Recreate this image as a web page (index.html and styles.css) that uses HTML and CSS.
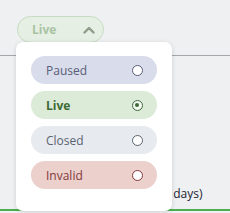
FILE: index.html
```html
<!DOCTYPE html>
<html>
<head>
<meta charset="utf-8">
<link rel="stylesheet" href="styles.css">
</head>
<body>
<div class="page">
  <div class="header">
    <div class="trigger">
      <span class="trigger-label">Live</span>
      <svg class="chevron" width="12" height="8" viewBox="0 0 12 8"><path d="M1.5 6.5 L6 2 L10.5 6.5" fill="none" stroke="#8e9c8b" stroke-width="2.4" stroke-linecap="round" stroke-linejoin="round"/></svg>
    </div>
  </div>
  <div class="content">
    <div class="meta">Last 30 (30 days)</div>
  </div>
  <div class="progress"></div>

  <div class="menu">
    <div class="opt paused"><span>Paused</span><span class="radio"></span></div>
    <div class="opt live"><span>Live</span><span class="radio checked"></span></div>
    <div class="opt closed"><span>Closed</span><span class="radio"></span></div>
    <div class="opt invalid"><span>Invalid</span><span class="radio"></span></div>
  </div>
</div>
</body>
</html>
```

FILE: styles.css
```css
html, body {
  margin: 0;
  padding: 0;
}
body {
  background: #eff0f2;
  font-family: "Open Sans", "Noto Sans", sans-serif;
  font-size: 12px;
  width: 230px;
  height: 213px;
  overflow: hidden;
}
.page {
  position: relative;
  height: 213px;
}
.header {
  height: 56px;
  box-sizing: border-box;
  padding: 16px 0 0 17px;
  border-bottom: 1px solid #a3a7ab;
}
.trigger {
  width: 87px;
  height: 27px;
  box-sizing: border-box;
  border: 1px solid #c6dbc2;
  border-radius: 14px;
  background: #e5efe3;
  display: flex;
  align-items: center;
  justify-content: space-between;
  padding: 0 8px 0 14px;
}
.trigger-label {
  font-weight: 700;
  color: #a8c3a4;
}
.chevron {
  display: block;
}
.content {
  height: 153px;
  box-sizing: border-box;
  padding: 129px 0 0 110px;
}
.meta {
  color: #1c1f33;
  font-size: 12px;
  line-height: 17px;
  white-space: nowrap;
}
.progress {
  height: 2px;
  background: #4caf50;
}
.menu {
  position: absolute;
  top: 42px;
  left: 16px;
  width: 156px;
  height: 169px;
  box-sizing: border-box;
  background: #fff;
  border-radius: 7px;
  box-shadow: 0 1px 5px rgba(0, 0, 0, 0.14);
  padding: 14px 15px;
  display: flex;
  flex-direction: column;
  gap: 7px;
}
.opt {
  height: 28px;
  border-radius: 14px;
  display: flex;
  align-items: center;
  justify-content: space-between;
  padding: 0 14px 0 15px;
}
.radio {
  width: 11px;
  height: 11px;
  box-sizing: border-box;
  border-radius: 50%;
  border: 1.5px solid currentColor;
  background: #fff;
  position: relative;
}
.radio.checked::after {
  content: "";
  position: absolute;
  left: 2px;
  top: 2px;
  width: 4px;
  height: 4px;
  border-radius: 50%;
  background: currentColor;
}
.paused { background: #d9dcea; color: #585d78; }
.live { background: #dcebd8; color: #3c6a34; font-weight: 700; }
.live .radio { background: #f4f8f3; }
.closed { background: #e7eaee; color: #5a6371; }
.invalid { background: #ebd0cc; color: #83383a; }
```
